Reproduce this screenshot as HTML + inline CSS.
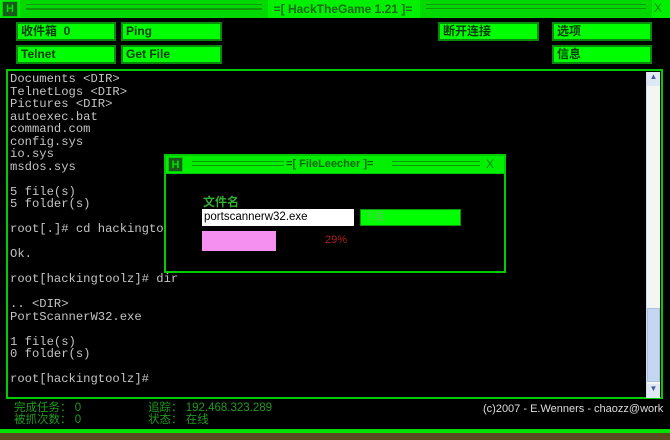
<!DOCTYPE html>
<html><head><meta charset="utf-8"><style>
*{margin:0;padding:0;box-sizing:border-box}
body{width:670px;height:440px;background:#000;position:relative;overflow:hidden;font-family:"Liberation Sans","Noto Sans CJK SC",sans-serif}
.a{position:absolute}
.g{background:#00f000}
.btn{position:absolute;background:#00ff00;border:2px solid #0a8a0a;font-size:12px;font-weight:bold;color:#0b3a0b;padding-left:3px;line-height:14px;height:19px}
.lines{position:absolute;border-top:1px solid #0a9a0a;border-bottom:1px solid #0a9a0a;height:5px}
.hb{position:absolute;background:#1a5a1a;border:1px solid #0c0;color:#00e000;font-weight:bold;font-size:11px;text-align:center;line-height:14px}
pre{font-family:"Liberation Mono",monospace;font-size:12.2px;line-height:12.5px;color:#c4c4c4}
</style></head><body>
<div class="a g" style="left:0;top:0;width:670px;height:18px"></div>
<div class="hb" style="left:2px;top:1px;width:16px;height:16px">H</div>
<div class="a" style="left:20px;top:0;width:248px;height:18px;background:#00d800"></div>
<div class="lines" style="left:26px;top:4px;width:236px"></div>
<div class="lines" style="left:26px;top:9px;width:236px;height:1px;border-bottom:none"></div>
<div class="a" style="left:268px;top:2px;width:150px;font-size:12px;color:#1a6a1a;font-weight:bold;text-align:center">=[ HackTheGame 1.21 ]=</div>
<div class="a" style="left:420px;top:0;width:232px;height:18px;background:#00d800"></div>
<div class="lines" style="left:426px;top:4px;width:220px"></div>
<div class="a" style="left:654px;top:1px;font-size:12px;color:#0a8a0a">X</div>

<div class="btn" style="left:16px;top:22px;width:100px">收件箱 &nbsp;0</div>
<div class="btn" style="left:121px;top:22px;width:101px">Ping</div>
<div class="btn" style="left:438px;top:22px;width:101px">断开连接</div>
<div class="btn" style="left:552px;top:22px;width:100px">选项</div>
<div class="btn" style="left:16px;top:45px;width:100px">Telnet</div>
<div class="btn" style="left:121px;top:45px;width:101px">Get File</div>
<div class="btn" style="left:552px;top:45px;width:100px">信息</div>

<div class="a" style="left:6px;top:69px;width:657px;height:330px;border:2px solid #0c0"></div>
<pre class="a" style="left:10px;top:73px">Documents &lt;DIR&gt;
TelnetLogs &lt;DIR&gt;
Pictures &lt;DIR&gt;
autoexec.bat
command.com
config.sys
io.sys
msdos.sys

5 file(s)
5 folder(s)

root[.]# cd hackingtoolz

Ok.

root[hackingtoolz]# dir

.. &lt;DIR&gt;
PortScannerW32.exe

1 file(s)
0 folder(s)

root[hackingtoolz]#</pre>
<div class="a" style="left:646px;top:72px;width:14px;height:326px;background:#f4f6f4;border-left:1px solid #cde"></div>
<div class="a" style="left:647px;top:72px;width:13px;height:14px;background:#dfe8f5;color:#4a5a9a;font-size:8px;text-align:center">▲</div>
<div class="a" style="left:647px;top:308px;width:13px;height:74px;background:#c4d6f2;border:1px solid #aebfe0"></div>
<div class="a" style="left:647px;top:384px;width:13px;height:14px;background:#dfe8f5;color:#4a5a9a;font-size:8px;text-align:center">▼</div>

<div class="a" style="left:164px;top:154px;width:342px;height:119px;background:#000;border:2px solid #0c0"></div>
<div class="a g" style="left:166px;top:156px;width:338px;height:17px"></div>
<div class="hb" style="left:168px;top:157px;width:15px;height:15px">H</div>
<div class="lines" style="left:192px;top:161px;width:92px"></div>
<div class="a" style="left:286px;top:158px;width:100px;font-size:11px;font-weight:bold;color:#0b6a0b">=[ FileLeecher ]=</div>
<div class="lines" style="left:392px;top:161px;width:88px"></div>
<div class="a" style="left:486px;top:157px;font-size:12px;color:#0a8a0a">X</div>
<div class="a" style="left:166px;top:173px;width:338px;height:1px;background:#0c0"></div>
<div class="a" style="left:203px;top:193px;font-size:12px;font-weight:bold;color:#2fb02f">文件名</div>
<div class="a" style="left:202px;top:209px;width:152px;height:17px;background:#fff;font-size:11.5px;color:#000;line-height:17px;padding-left:2px">portscannerw32.exe</div>
<div class="a" style="left:360px;top:209px;width:101px;height:17px;background:#00ff00;border:1px solid #0a9a0a;font-size:11px;color:#4ad04a;padding-left:2px;line-height:15px">下载</div>
<div class="a" style="left:202px;top:231px;width:74px;height:20px;background:#f590f0"></div>
<div class="a" style="left:325px;top:234px;font-size:11px;color:#b02020">29%</div>

<div class="a" style="left:14px;top:402px;font-size:11.5px;color:#1f9a1f;line-height:12px">完成任务： 0<br>被抓次数： 0</div>
<div class="a" style="left:148px;top:402px;font-size:11.5px;color:#1f9a1f;line-height:12px">追踪： 192.468.323.289<br>状态： 在线</div>
<div class="a" style="left:483px;top:403px;font-size:11px;color:#ddd">(c)2007 - E.Wenners - chaozz@work</div>
<div class="a" style="left:0;top:429px;width:670px;height:4px;background:#00e000"></div>
<div class="a" style="left:0;top:433px;width:670px;height:7px;background:#5a4a22"></div>
</body></html>
